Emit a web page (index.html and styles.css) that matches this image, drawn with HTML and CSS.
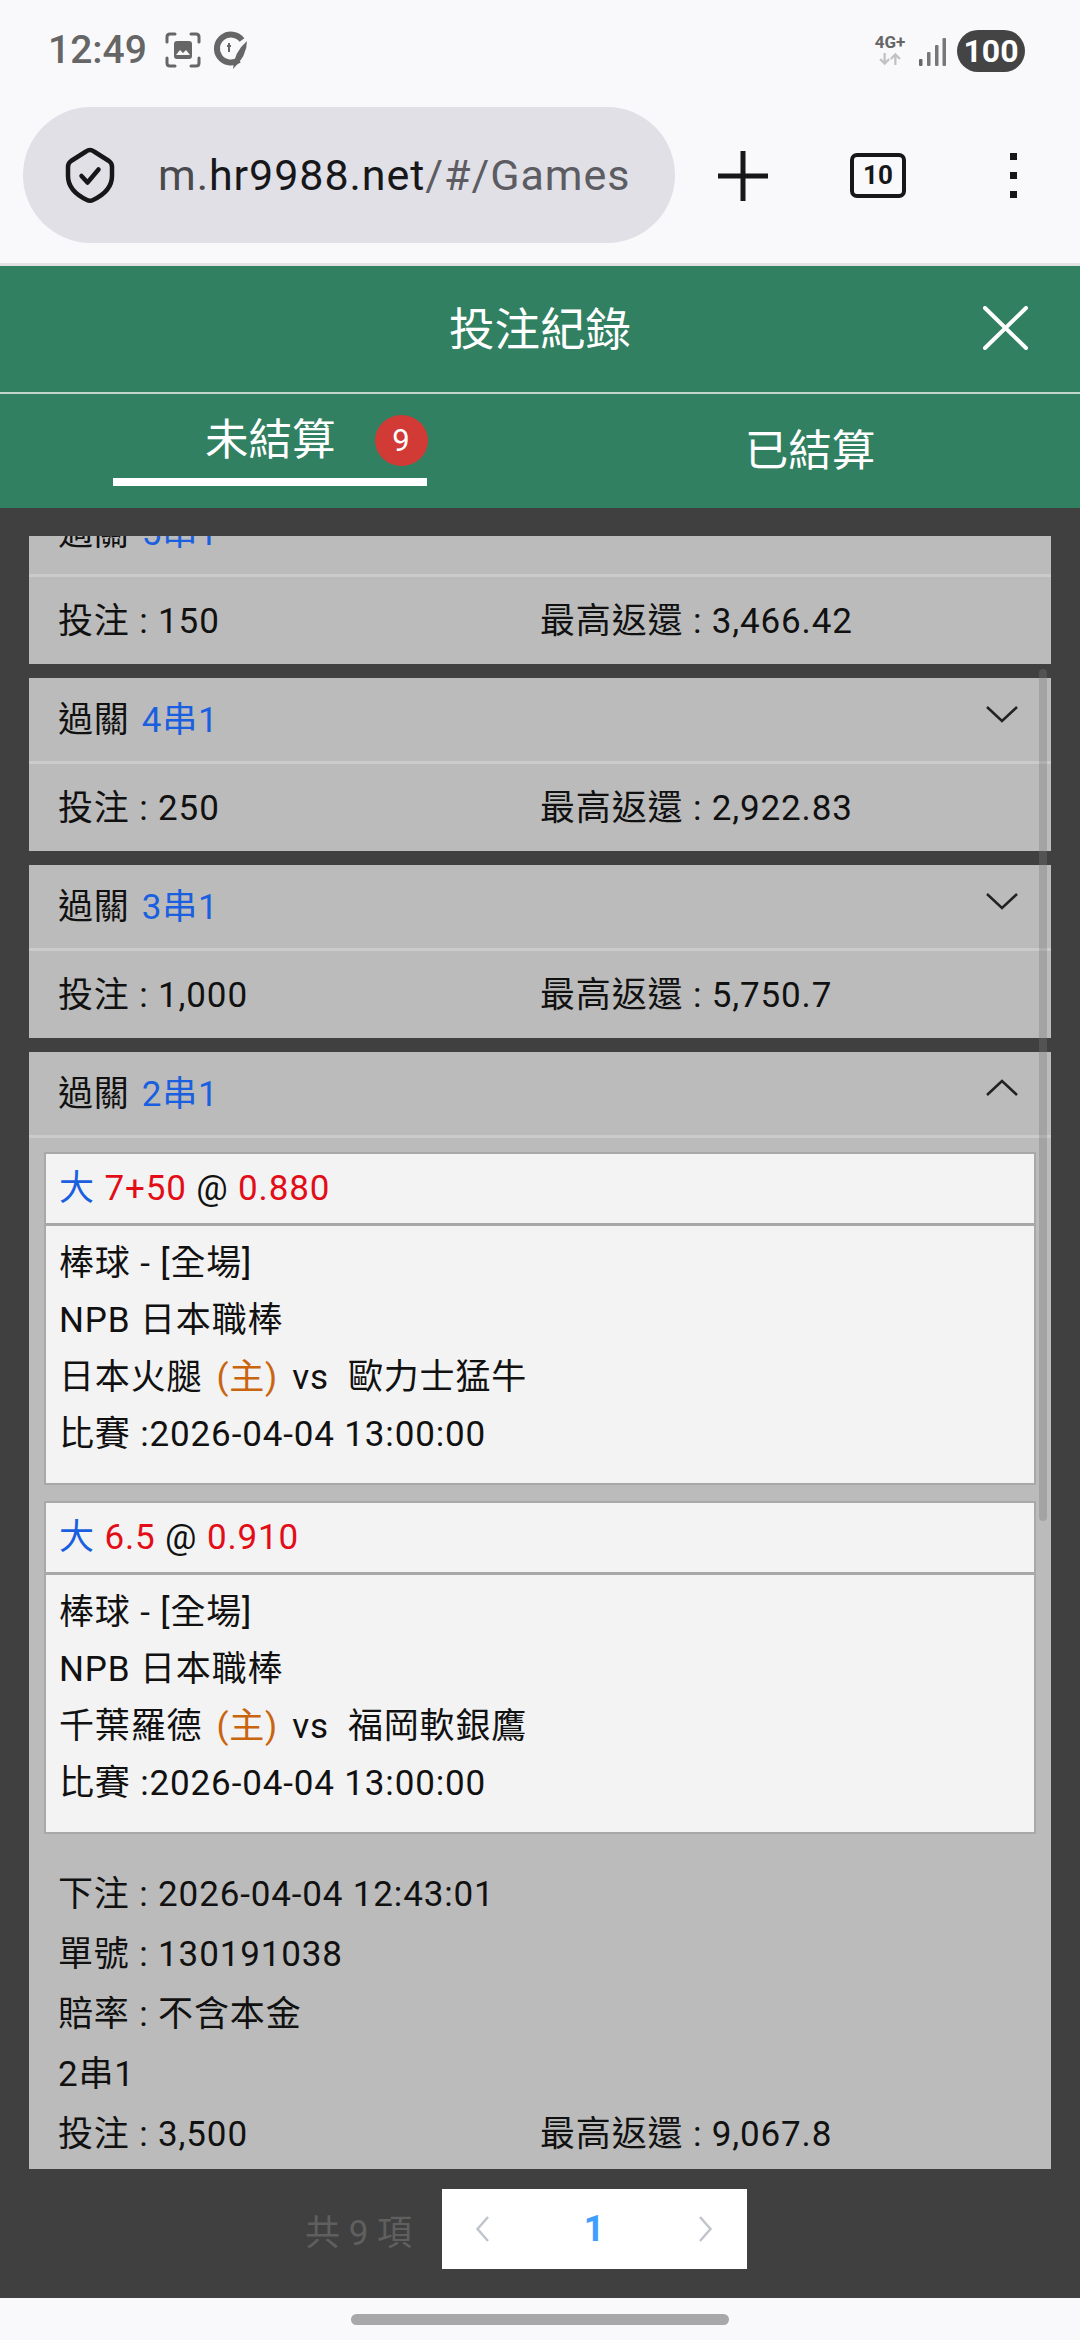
FILE: index.html
```html
<!DOCTYPE html>
<html lang="zh-Hant">
<head>
    <meta charset="UTF-8">
    <meta name="viewport" content="width=device-width, initial-scale=1.0">
    <title>投注紀錄</title>
    <link rel="stylesheet" href="styles.css">
</head>
<body>
    <div class="status">
        <div class="status-left">
            <span class="clock">12:49</span>
            <svg class="ico-shot" viewBox="0 0 36 36" fill="none" stroke="#666" stroke-width="3" stroke-linecap="round">
                <path d="M2 10V5Q2 2 5 2h5M26 2h5q3 0 3 3v5M34 26v5q0 3-3 3h-5M10 34H5q-3 0-3-3v-5"/>
                <rect x="9" y="9" width="18" height="18" rx="3" fill="#666" stroke="none"/>
                <path d="M11 23l4-5 3 3 3-3 4 5z" fill="#f9f9fb" stroke="none"/>
            </svg>
            <svg class="ico-pen" viewBox="0 0 36 40" fill="none">
                <path d="M27 30A14 14 0 1 1 30 10" stroke="#666" stroke-width="6"/>
                <path d="M17 13v9M15 16h4" stroke="#666" stroke-width="2"/>
                <path d="M35 11Q35 26 21 39Q22 22 35 11z" fill="#666"/>
            </svg>
        </div>
        <div class="status-right">
            <div class="net">
                <span class="net-label">4G+</span>
                <svg class="net-arrows" viewBox="0 0 34 16" fill="none" stroke="#c2c2c2" stroke-width="3">
                    <path d="M10 0v14M4 8l6 6 6-6M24 16V2M18 8l6-6 6 6"/>
                </svg>
            </div>
            <svg class="signal" viewBox="0 0 27 28" fill="#777">
                <rect x="0" y="21" width="3.5" height="7" rx="1" fill="#666"/>
                <rect x="8" y="14" width="3.5" height="14" rx="1"/>
                <rect x="16" y="7" width="3.5" height="21" rx="1"/>
                <rect x="23.5" y="0" width="3.5" height="28" rx="1"/>
            </svg>
            <span class="battery">100</span>
        </div>
    </div>

    <div class="toolbar">
        <div class="url-pill">
            <svg class="shield" viewBox="0 0 50 57" fill="none" stroke="#17171a" stroke-width="4.5" stroke-linejoin="round" stroke-linecap="round">
                <path d="M25 3Q27 3 29 4.500L44 14Q47 16 47 20V29Q47 44 28 53Q25 54.500 22 53Q3 44 3 29V20Q3 16 6 14L21 4.500Q23 3 25 3z"/>
                <path d="M16.500 29l6 6.500 11-13"/>
            </svg>
            <span class="url"><i>m.</i><b>hr9988.net</b>/#/Games</span>
        </div>
        <svg class="ico-plus" viewBox="0 0 50 50" stroke="#17171a" stroke-width="5">
            <path d="M0 25H50M25 0V50"/>
        </svg>
        <span class="tab-count">10</span>
        <div class="dots"><i></i><i></i><i></i></div>
    </div>

    <header class="modal-head">
        <h1>投注紀錄</h1>
        <svg class="ico-close" viewBox="0 0 45 44" stroke="#fff" stroke-width="4" stroke-linecap="round">
            <path d="M2 2L43 42M43 2L2 42"/>
        </svg>
    </header>

    <nav class="tabs">
        <div class="tab">
            <div class="tab-active">
                <span class="tab-label">未結算</span>
                <span class="badge">9</span>
            </div>
        </div>
        <div class="tab"><span class="tab-other">已結算</span></div>
    </nav>

    <main class="modal-body">
        <div class="list">
            <section class="card card-cut">
                <div class="card-head"><span>過關<em>5串1</em></span></div>
                <div class="card-row"><span>投注 : 150</span><span>最高返還 : 3,466.42</span></div>
            </section>

            <section class="card">
                <div class="card-head">
                    <span>過關<em>4串1</em></span>
                    <svg class="chev" viewBox="0 0 32 18" fill="none" stroke="#222" stroke-width="2.5"><path d="M1 2l15 14L31 2"/></svg>
                </div>
                <div class="card-row"><span>投注 : 250</span><span>最高返還 : 2,922.83</span></div>
            </section>

            <section class="card">
                <div class="card-head">
                    <span>過關<em>3串1</em></span>
                    <svg class="chev" viewBox="0 0 32 18" fill="none" stroke="#222" stroke-width="2.5"><path d="M1 2l15 14L31 2"/></svg>
                </div>
                <div class="card-row"><span>投注 : 1,000</span><span>最高返還 : 5,750.7</span></div>
            </section>

            <section class="card">
                <div class="card-head">
                    <span>過關<em>2串1</em></span>
                    <svg class="chev" viewBox="0 0 32 18" fill="none" stroke="#222" stroke-width="2.5"><path d="M1 16L16 2l15 14"/></svg>
                </div>
                <div class="bets">
                    <div class="bet">
                        <div class="bet-title"><em>大</em> <u>7+50</u> @ <u>0.880</u></div>
                        <div class="bet-info">
                            <p>棒球 - [全場]</p>
                            <p>NPB 日本職棒</p>
                            <p>日本火腿<s>(主)</s>vs&nbsp; 歐力士猛牛</p>
                            <p>比賽 :2026-04-04 13:00:00</p>
                        </div>
                    </div>
                    <div class="bet">
                        <div class="bet-title"><em>大</em> <u>6.5</u> @ <u>0.910</u></div>
                        <div class="bet-info">
                            <p>棒球 - [全場]</p>
                            <p>NPB 日本職棒</p>
                            <p>千葉羅德<s>(主)</s>vs&nbsp; 福岡軟銀鷹</p>
                            <p>比賽 :2026-04-04 13:00:00</p>
                        </div>
                    </div>
                </div>
                <div class="summary">
                    <p>下注 : 2026-04-04 12:43:01</p>
                    <p>單號 : 130191038</p>
                    <p>賠率 : 不含本金</p>
                    <p>2串1</p>
                    <div class="summary-row"><span>投注 : 3,500</span><span>最高返還 : 9,067.8</span></div>
                </div>
            </section>
            <div class="scrollbar"></div>
        </div>

        <div class="pager">
            <span class="pager-total">共 9 項</span>
            <div class="pager-box">
                <svg class="pager-arrow" viewBox="0 0 15 26" fill="none" stroke="#c0c4cc" stroke-width="2.5"><path d="M13 1L2.500 13 13 25"/></svg>
                <span class="pager-num">1</span>
                <svg class="pager-arrow" viewBox="0 0 15 26" fill="none" stroke="#c0c4cc" stroke-width="2.5"><path d="M2 1l10.500 12L2 25"/></svg>
            </div>
        </div>
    </main>

    <div class="home-area"><div class="home-bar"></div></div>
</body>
</html>
```

FILE: styles.css
```css
* {
    box-sizing: border-box;
}
body {
    margin: 0;
    width: 1080px;
    height: 2340px;
    overflow: hidden;
    background: #f9f9fb;
    font-family: Roboto, "Noto Sans CJK TC", sans-serif;
    color: #111;
}
p {
    margin: 0;
}
em, s, u, i {
    font-style: normal;
    text-decoration: none;
}

/* phone status bar */
.status {
    height: 107px;
    padding: 28px 55px 0 48px;
    display: flex;
    justify-content: space-between;
    align-items: flex-start;
}
.status-left {
    display: flex;
    align-items: center;
    height: 44px;
}
.clock {
    font-weight: 500;
    font-size: 39px;
    color: #666;
    width: 98px;
}
.ico-shot {
    width: 36px;
    height: 36px;
    margin-left: 19px;
}
.ico-pen {
    width: 36px;
    height: 40px;
    margin-left: 11px;
}
.status-right {
    display: flex;
    align-items: center;
    height: 44px;
}
.net {
    width: 36px;
    display: flex;
    flex-direction: column;
    align-items: center;
}
.net-label {
    font-weight: 700;
    font-size: 17px;
    line-height: 16px;
    color: #666;
}
.net-arrows {
    width: 26px;
    height: 14px;
    margin-top: 2px;
}
.signal {
    width: 27px;
    height: 28px;
    margin-left: 11px;
    margin-top: 4px;
}
.battery {
    width: 68px;
    height: 42px;
    margin-left: 11px;
    margin-top: 2px;
    border-radius: 21px;
    background: #444;
    color: #fff;
    font-weight: 700;
    font-size: 32px;
    line-height: 42px;
    text-align: center;
}

/* browser toolbar */
.toolbar {
    height: 159px;
    padding: 0 0 23px 23px;
    display: flex;
    align-items: flex-start;
    border-bottom: 3px solid #e2e2e4;
}
.url-pill {
    width: 652px;
    height: 136px;
    border-radius: 68px;
    background: #e0e0e6;
    display: flex;
    align-items: center;
    padding-left: 42px;
}
.shield {
    width: 50px;
    height: 57px;
    flex: none;
}
.url {
    margin-left: 43px;
    font-size: 43px;
    letter-spacing: 0.95px;
    color: #5c5c62;
    white-space: nowrap;
}
.url i {
    color: #4a4a4e;
}
.url b {
    font-weight: 400;
    color: #17171a;
}
.ico-plus {
    width: 50px;
    height: 50px;
    margin: 44px 0 0 43px;
}
.tab-count {
    width: 56px;
    height: 45px;
    margin: 46px 0 0 82px;
    border: 4px solid #17171a;
    border-radius: 7px;
    font-weight: 700;
    font-size: 26px;
    line-height: 37px;
    text-align: center;
    color: #17171a;
}
.dots {
    margin: 46px 0 0 104px;
    display: flex;
    flex-direction: column;
    gap: 12px;
}
.dots i {
    display: block;
    width: 7px;
    height: 7px;
    background: #17171a;
}

/* modal head */
.modal-head {
    height: 128px;
    padding-bottom: 6px;
    background: #318062;
    display: flex;
    align-items: center;
    justify-content: center;
    position: relative;
    border-bottom: 2px solid #c3d6cd;
}
.modal-head h1 {
    margin: 0;
    font-weight: 400;
    font-size: 45.5px;
    color: #fff;
}
.ico-close {
    position: absolute;
    right: 52px;
    top: 40px;
    width: 45px;
    height: 44px;
}

.tabs {
    height: 114px;
    background: #318062;
    display: grid;
    grid-template-columns: 1fr 1fr;
    color: #fff;
}
.tab {
    display: flex;
    justify-content: center;
}
.tab-active {
    width: 314px;
    height: 92px;
    border-bottom: 8px solid #fff;
    padding-left: 92px;
    padding-top: 22px;
    display: flex;
    align-items: flex-start;
    font-size: 43.5px;
    line-height: 50px;
}
.tab-label {
    white-space: nowrap;
}
.tab-other {
    font-size: 43.5px;
    line-height: 50px;
    padding-top: 33px;
}
.badge {
    width: 53px;
    height: 51px;
    flex: none;
    margin-left: 39px;
    margin-top: -1px;
    border-radius: 50%;
    background: #d23a35;
    font-size: 31px;
    line-height: 51px;
    text-align: center;
}

/* modal body */
.modal-body {
    height: 1790px;
    background: #404040;
    padding-top: 28px;
}
.list {
    position: relative;
    height: 1633px;
    margin: 0 29px;
    overflow: hidden;
    display: flex;
    flex-direction: column;
    gap: 14px;
    font-size: 35px;
    letter-spacing: 0.85px;
}
.card {
    background: #bbb;
    flex: none;
}
.card-cut {
    margin-top: -45px;
}
.card-head {
    height: 86px;
    padding: 0 33px 6px 29px;
    border-bottom: 3px solid #cbcbcb;
    display: flex;
    justify-content: space-between;
    align-items: center;
}
.card-head em {
    margin-left: 12px;
    color: #1a5fe0;
}
.chev {
    width: 32px;
    height: 18px;
    margin-bottom: 5px;
}
.card-row {
    height: 87px;
    padding: 0 29px 7px;
    display: grid;
    grid-template-columns: 1fr 1fr;
    align-items: center;
}

.bets {
    padding: 14px 15px 0;
    display: flex;
    flex-direction: column;
    gap: 16px;
}
.bet {
    background: #f3f3f3;
}
.bet-title {
    height: 73px;
    padding: 0 13px;
    border: 2px solid #a8a8a8;
    line-height: 70px;
    white-space: pre;
}
.bet-title em {
    color: #1a5fe0;
}
.bet-title u {
    color: #e30d18;
}
.bet-info {
    height: 260px;
    padding: 9px 13px 0;
    border: 2px solid #a8a8a8;
    border-top: 1px solid #a8a8a8;
}
.bet-info p {
    line-height: 57px;
}
.bet-info s {
    margin: 0 14px;
    color: #c9640f;
}
.summary {
    padding: 31px 29px 9px;
}
.summary p {
    line-height: 60px;
}
.summary-row {
    display: grid;
    grid-template-columns: 1fr 1fr;
    line-height: 60px;
}

.scrollbar {
    position: absolute;
    right: 4px;
    top: 133px;
    width: 8px;
    height: 852px;
    border-radius: 4px;
    background: rgba(120, 120, 120, 0.35);
}

/* pagination */
.pager {
    margin-top: 20px;
    display: flex;
    align-items: center;
    padding-left: 305px;
}
.pager-total {
    width: 137px;
    font-size: 35px;
    color: #5f5f5f;
}
.pager-box {
    width: 305px;
    height: 80px;
    background: #fff;
    display: flex;
    align-items: center;
    justify-content: space-between;
    padding: 0 34px 0 33px;
}
.pager-arrow {
    width: 15px;
    height: 26px;
}
.pager-num {
    font-weight: 700;
    font-size: 36px;
    color: #409eff;
}

.home-area {
    height: 42px;
    padding-top: 16px;
    background: #f9f9fb;
}
.home-bar {
    width: 378px;
    height: 11px;
    margin: 0 auto;
    border-radius: 6px;
    background: #a8a8aa;
}
```
